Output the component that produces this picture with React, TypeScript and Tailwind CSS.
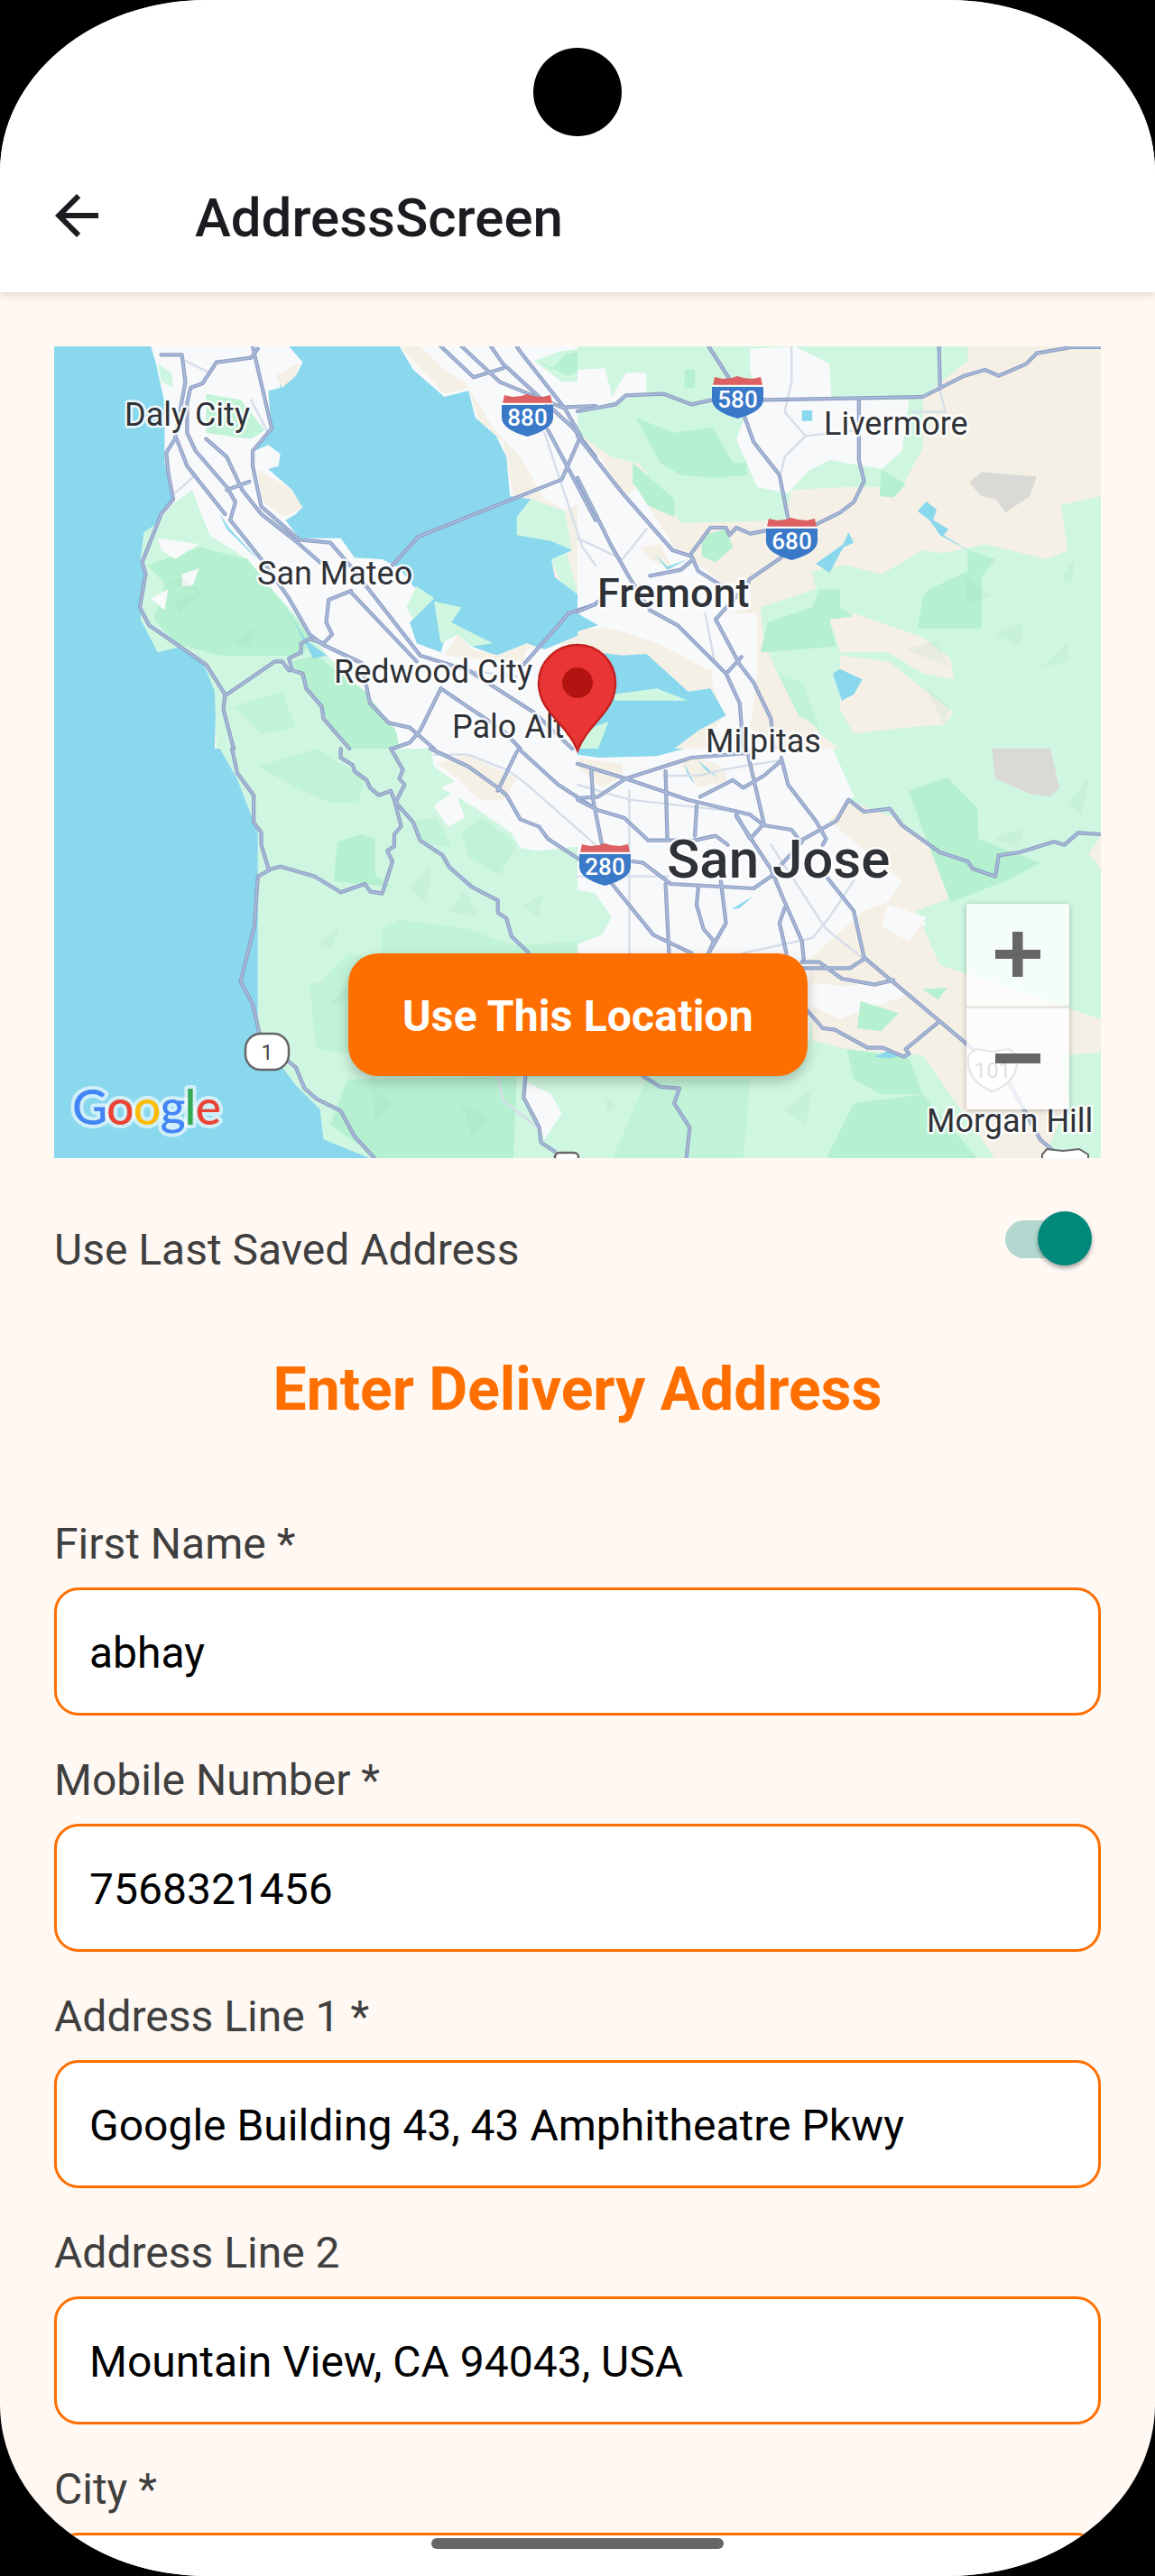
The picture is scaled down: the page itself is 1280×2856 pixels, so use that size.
import React from 'react';

type Fill = [string, string];

const WATER = '#8ad8ee';
const LIGHT = '#cff6e0';
const MID = '#c0f3d7';
const DARK = '#b5f0d0';
const TAN = '#f5f0e6';
const URBAN = '#f8f9fa';
const GREY = '#d9dad5';
const FACET = '#8fd0ac20';

// every quadrant below is written in the pixels of a zoomed crop, so it is scaled back down when drawn
const quadrants: { at: string; fills: Fill[]; roads: string[]; minor: string[] }[] = [
  {
    at: 'translate(0,-4) scale(0.38265,0.33333)',
    fills: [
      [TAN, '1000,12 1568,12 1568,1010 1440,1000 1300,1040 1200,1000 1340,640 1330,500 1300,330 1230,260 1200,150 1130,170 1040,60'],
      [URBAN, '1060,12 1568,12 1568,500 1480,560 1420,520 1350,380 1270,280 1190,130 1130,90'],
      [LIGHT, '1390,60 1460,30 1568,12 1568,130 1470,130'],
      [DARK, '1400,60 1440,90 1480,40 1568,12 1568,70 1490,110'],
      [LIGHT, '1340,580 1380,520 1480,560 1500,700 1568,790 1568,880 1490,860 1440,720 1400,660 1340,640'],
      [TAN, '1480,680 1568,760 1568,860 1520,850'],
      [WATER, '680,12 720,65 700,110 650,110 655,150 620,160 630,290 580,360 620,340 655,370 650,410 620,420 690,490 690,520 720,545 700,570 670,590 710,650 800,650 830,650 870,715 950,720 1000,750 1040,810 1100,850 1030,930 1050,1000 1120,1030 1130,990 1170,970 1210,1010 1280,1040 1370,1000 1420,1020 1568,950 1568,840 1530,850 1450,780 1440,720 1500,690 1440,660 1340,640 1340,580 1380,520 1320,510 1310,380 1280,310 1220,250 1200,160 1130,180 1040,90 1000,12'],
      [TAN, '640,110 710,65 700,110 660,150'],
      [TAN, '590,420 690,490 720,550 660,580 600,520'],
      [LIGHT, '1050,810 1100,850 1040,920 1020,880'],
      [LIGHT, '1100,860 1180,880 1150,930 1270,1000 1210,1010 1170,970 1120,1000'],
      [TAN, '1130,1040 1170,970 1210,1020 1290,1040 1370,1000 1360,1060 1200,1050'],
      [WATER, '0,12 280,12 295,70 320,200 320,400 345,520 300,590 250,720 265,770 245,880 275,950 370,1020 440,1070 470,1160 465,1350 0,1350'],
      [LIGHT, '300,70 340,100 345,150 310,130'],
      [MID, '440,170 540,190 610,290 570,320 440,300'],
      [LIGHT, '260,630 300,600 340,540 400,490 450,640 560,720 640,830 740,960 790,1040 900,1160 990,1290 1000,1350 470,1350 465,1160 430,1060 370,1010 300,1030 250,920 265,770 250,720'],
      [DARK, '270,740 420,680 560,720 650,850 740,980 720,1040 480,1040 350,1000 290,920 320,800'],
      [URBAN, '300,650 420,670 350,720 310,690'],
      [URBAN, '370,770 420,750 400,810 370,810'],
      [URBAN, '280,850 330,820 320,890'],
      [DARK, '690,1060 760,1040 900,1160 990,1290 1000,1350 850,1350 730,1150'],
      [MID, '520,1210 660,1160 700,1280 600,1300'],
      [FACET, '350,860 440,820 360,900'],
      [FACET, '520,1000 590,940 560,1010'],
      [FACET, '330,800 430,830 370,780'],
      [WATER, '480,570 510,620 590,720 570,700 500,620'],
      [WATER, '640,830 730,990 790,1040 750,1050 700,940'],
      [URBAN, '720,900 800,830 860,920 800,970 760,950'],
    ],
    roads: [
      'M310 40 H370 L380 130 L350 320 L325 365 L330 430 L345 520 L310 570 L255 730 L265 770 L248 880 L275 940 L440 1070 L495 1170 L490 1220 L520 1350',
      'M590 20 L570 50 L470 65 L430 135 L395 150 L385 200 L385 300 L410 360 L500 480 L525 530 L510 590 L600 720 L680 850 L740 970 L780 1005 L890 1065 L915 1200 L970 1265 L1030 1280 L1100 1350',
      'M575 12 L630 285 L575 360 L575 410 L600 545 L710 655 L800 665 L860 745 L1060 1040 L1200 1090 L1390 1230 L1500 1350',
      'M440 320 L500 380 L545 490 L600 570 L700 660 L770 730',
      'M980 740 L1055 645 L1470 455 L1525 310 L1480 220 L1350 30 L1340 12',
      'M355 320 L385 410 L495 570',
      'M1120 12 L1215 115 L1300 85',
      'M1180 12 L1290 130 L1470 215 L1568 210',
      'M1265 12 L1300 70 L1500 280 L1568 380',
      'M1430 290 L1490 420 L1568 590',
      'M500 490 L565 462',
      'M860 825 L795 855 L788 930 L805 970 L780 1000 L740 985 L715 1000 L715 1030 L680 1050 L690 1090 L720 1100 L730 1150 L775 1210 L780 1250 L855 1350',
      'M500 1170 L640 1060 L660 1060 L680 1090',
      'M860 830 L1050 1060',
      'M1120 1150 L1060 1290 L1030 1330 L980 1350',
      'M1120 1150 L1300 1290 L1350 1350',
      'M1360 1070 L1490 900 L1568 870',
    ],
    minor: ['M380 60 L450 100', 'M570 190 L620 300', 'M350 500 L410 440', 'M1420 300 L1530 680 L1568 740', 'M1200 1090 L1340 1110'],
  },
  {
    at: 'translate(580,-4) scale(0.38265,0.33333)',
    fills: [
      [TAN, '0,12 1516,12 1516,1350 0,1350'],
      [LIGHT, '0,12 1130,12 1130,60 1000,180 1000,350 940,480 780,480 620,490 530,440 320,440 100,380 0,300'],
      [LIGHT, '160,370 530,440 620,490 600,590 300,600'],
      [URBAN, '0,90 80,85 100,180 120,140 140,100 200,100 200,170 90,200 0,230'],
      [URBAN, '500,20 630,12 730,70 735,180 600,190 540,190 500,100'],
      [URBAN, '540,190 700,190 820,190 960,190 940,360 880,420 730,390 670,425 610,500 520,480 460,320 480,260'],
      [DARK, '310,90 340,90 340,150 310,150'],
      [DARK, '280,300 390,280 450,400 490,400 490,440 400,450 300,440 240,400 170,250'],
      [DARK, '160,400 280,520 280,580 160,520'],
      [DARK, '360,640 430,620 450,680 400,730 360,710'],
      [DARK, '880,420 950,470 915,515 875,510'],
      [LIGHT, '1516,510 1400,540 1420,690 1360,720 1180,670 1060,700 1000,690 880,770 780,740 680,760 690,820 530,880 540,1000 580,1100 700,1300 760,1350 1516,1350'],
      [TAN, '730,920 800,900 1000,980 1080,1050 1090,1120 1000,1100 900,1030 760,1030'],
      [TAN, '760,1040 900,1060 1090,1230 1060,1270 950,1280 800,1300 760,1220'],
      [DARK, '700,820 760,820 760,880 800,910 730,920 750,1010 530,1030 550,930 680,880'],
      [DARK, '1020,820 1130,760 1130,690 1210,720 1170,780 1170,950 985,950 1000,850'],
      [MID, '580,1100 650,1130 700,1280 640,1240'],
      [FACET, '1120,780 1200,840 1130,870'],
      [FACET, '1400,780 1440,720 1430,800'],
      [FACET, '1210,970 1290,930 1280,1010'],
      [FACET, '1010,1150 1080,1210 1060,1270'],
      [FACET, '1340,1080 1420,1000 1420,1060'],
      [FACET, '950,1020 1040,990 1080,1080'],
      [GREY, '1135,465 1170,430 1330,445 1310,510 1240,565 1210,520 1170,510'],
      [WATER, '985,560 1010,528 1040,555 1030,590 1075,620 1060,640 1145,700 1050,640 1020,590'],
      [WATER, '690,735 770,670 785,630 800,665 770,680 730,765'],
      [WATER, '740,1100 760,1085 825,1120 800,1170 765,1190'],
      [WATER, '650,225 680,225 680,260 650,260'],
      [URBAN, '0,300 60,370 170,480 280,680 330,720 420,800 500,800 500,880 440,900 520,900 520,1100 500,1280 570,1350 370,1350 420,1240 380,1090 300,1040 230,1000 100,950 0,950'],
      [TAN, '60,370 170,480 140,510 90,420'],
      [TAN, '180,680 240,670 280,760 210,720'],
      [TAN, '300,1070 390,1090 390,1150 320,1110'],
      [WATER, '0,1000 60,1030 130,1040 200,1035 320,1160 385,1150 430,1240 350,1290 280,1350 0,1350'],
      [WATER, '0,900 60,940 0,960'],
      [WATER, '225,705 260,745 320,720 260,755'],
      [LIGHT, '100,1170 230,1150 320,1190 190,1190 110,1190'],
      [LIGHT, '0,1300 90,1260 60,1350 0,1350'],
    ],
    roads: [
      'M380 12 L440 120',
      'M0 228 L110 205 L140 175 L250 170 L330 205 L390 190 H540 L1000 180 L1120 110 L1180 90 L1220 110 L1300 70 L1330 35 L1430 15 L1516 15',
      'M485 250 L510 330 L585 440 L610 585',
      'M815 190 V390 L830 460 L800 530 L760 565 L690 605',
      'M1047 12 L1050 145',
      'M0 310 L130 500 L275 690 L330 710 L350 760 L420 810',
      'M0 450 L100 680 L150 780 L210 890 L290 940 L430 1100 L470 1200 L480 1350',
      'M330 700 L385 615 L430 615 L440 640 L460 615 L500 635 L545 625',
      'M590 715 L500 785 L490 800',
      'M0 895 L50 870 L60 860',
      'M210 775 L300 755 L335 720',
      'M495 800 L400 920 L470 1070 L510 1130 L560 1250 L570 1350',
      'M435 1095 L475 1045',
    ],
    minor: [
      'M620 12 L620 130 L600 230 L660 310 L600 380 L590 430',
      'M660 310 L815 290',
      'M1047 145 L1065 230 L970 230',
      'M0 650 L130 720 L200 620',
      'M370 900 L395 1050',
    ],
  },
  {
    at: 'translate(0,446) scale(0.38265,0.33333)',
    fills: [
      [LIGHT, '480,0 1100,0 1200,90 1120,130 1210,190 1400,340 1568,320 1568,1365 900,1365 780,1300 770,1200 700,1120 590,950 590,700 590,280 530,100'],
      [WATER, '0,0 480,0 530,100 590,280 590,700 590,950 700,1120 770,1200 780,1300 920,1365 0,1365'],
      [MID, '590,60 760,0 900,100 880,180 800,180 700,130'],
      [DARK, '820,310 890,285 930,300 930,420 980,460 880,450 810,440'],
      [MID, '950,600 1000,570 1200,600 1340,660 900,680'],
      [MID, '740,780 850,680 1568,640 1568,680 1400,1090 760,1000'],
      [DARK, '850,1100 1340,1090 1330,1365 940,1365 800,1250'],
      [MID, '1040,240 1110,230 1150,330 1060,310'],
      [MID, '1180,280 1240,230 1340,320 1290,420 1200,360'],
      [LIGHT, '770,590 950,600 950,700 850,680 770,780 740,780'],
      [FACET, '760,650 830,590 800,670'],
      [FACET, '800,850 880,740 860,830'],
      [FACET, '1030,460 1090,390 1080,520'],
      [FACET, '1140,540 1190,470 1230,560'],
      [FACET, '1360,520 1420,480 1400,560'],
      [FACET, '920,1130 990,1180 930,1240'],
      [FACET, '1180,1180 1260,1230 1210,1290'],
      [URBAN, '1090,0 1340,0 1568,180 1568,310 1420,280 1300,220 1200,140 1100,60'],
      [URBAN, '1100,190 1160,140 1190,230 1140,260'],
      [URBAN, '1290,210 1400,260 1400,340 1350,330'],
      [URBAN, '1370,1110 1440,1150 1470,1215 1420,1300 1400,1230 1360,1160'],
      [TAN, '1110,50 1200,20 1340,100 1300,170 1230,170 1160,90'],
    ],
    roads: [
      'M515 0 L530 80 L578 155 L578 245 L600 280 L600 320 L622 405',
      'M622 405 L590 425 L580 590 L540 775 L575 850 L595 950',
      'M678 1040 L700 1060 L725 1130 L760 1165 L830 1205 L870 1290 L930 1365',
      'M622 402 L655 392 L755 425 L830 478 L900 450 L915 475 L950 482 L980 375 L965 340 L985 325 L985 285 L1005 258 L985 170 L975 140 L940 155 L915 130 L905 105 L870 75 L865 55 L830 30 L830 0',
      'M975 0 L1010 70 L1000 100 L1015 120 L995 165 L990 180 L1040 245 L1060 305 L1125 355 L1145 395 L1210 460 L1285 505 L1285 545 L1310 565 L1325 625 L1375 680',
      'M1090 0 L1200 60 L1285 130 L1310 155 L1350 235 L1405 260 L1430 300 L1530 375',
      'M1345 0 L1460 120 L1568 200',
      'M1340 10 L1285 140',
      'M1365 1090 L1360 1160 L1405 1260 L1410 1310 L1450 1340',
    ],
    minor: ['M1100 20 H1200 L1310 70 L1360 110 L1568 320', 'M1285 1090 L1300 1170 L1400 1260'],
  },
  {
    at: 'translate(580,446) scale(0.38265,0.33333)',
    fills: [
      [LIGHT, '730,0 1516,0 1516,1365 0,1365 0,470 50,480 100,560 70,620 0,650 0,1090 670,970'],
      [URBAN, '0,0 740,0 800,160 730,240 940,440 900,510 1010,580 960,640 830,540 820,690 690,700 670,970 0,1090 0,650 70,620 100,560 50,480 0,470'],
      [TAN, '780,170 920,230 1130,400 1120,480 980,540 1050,720 1516,900 1516,1000 1420,1180 1350,1365 1210,1365 1000,1020 780,1000 680,970 670,700 830,540 900,510 940,440 730,240'],
      [URBAN, '900,520 1010,560 960,640 880,590'],
      [URBAN, '680,780 780,790 890,770 950,820 760,900 670,850'],
      [TAN, '0,30 130,50 130,90 70,130 0,60'],
      [TAN, '290,40 360,30 430,70 430,110 350,130'],
      [LIGHT, '1400,1020 1516,1010 1516,1365 1370,1365 1420,1180'],
      [DARK, '960,140 1070,95 1160,200 1160,300 1340,380 1240,440 1130,490 1080,510 1000,270'],
      [DARK, '820,840 930,880 880,940 810,930'],
      [DARK, '780,1000 960,1030 1000,1150 880,1150 800,1100'],
      [MID, '200,1100 500,1100 480,1365 100,1365'],
      [DARK, '800,1180 1000,1150 1160,1365 720,1365'],
      [DARK, '1000,800 1070,795 1045,835'],
      [FACET, '1210,300 1290,260 1280,330'],
      [FACET, '1420,180 1480,100 1460,220'],
      [FACET, '70,1140 110,1190 90,1210'],
      [FACET, '600,1200 680,1130 660,1260'],
      [GREY, '1200,0 1370,0 1395,130 1370,160 1310,150 1210,100'],
      [TAN, '1480,350 1516,290 1516,400'],
      [WATER, '0,0 310,0 230,25 60,30 0,20'],
      [WATER, '860,1025 900,1005 950,1020 900,1030'],
      [WATER, '445,535 510,490 470,530'],
      [WATER, '310,50 340,120 320,90'],
      [WATER, '350,40 410,100 370,70'],
    ],
    roads: [
      'M0 50 L140 100 L320 170 L500 220 L540 255 L620 270 L640 300',
      'M0 165 L60 160 L140 100 L330 30 L490 15',
      'M40 70 L45 170 L70 315',
      'M490 0 L540 250 L500 300 L460 220',
      'M590 30 L610 120 L690 240 L720 300 L710 320',
      'M460 225 L560 400 L600 510 L650 640 L655 700',
      'M640 310 L750 240 L785 170 L830 210 L905 200 L940 255 L1050 345 L1130 375 L1145 400 L1210 425 L1220 355 L1280 345 L1380 310 L1410 320 L1450 280 L1516 285',
      'M710 410 L800 540 L830 695 L1130 985 L1240 1090 L1340 1300 L1380 1340',
      'M355 160 L450 105 L480 130 L540 90 L590 40',
      'M345 190 L340 290',
      'M255 75 L260 300',
      'M160 375 L190 380 L270 450 L510 465 L560 425 L650 310',
      'M350 455 L345 520 L365 600 L395 640 L380 680',
      'M415 440 L430 580 L380 680',
      'M255 450 L265 680',
      'M100 450 L220 620 L330 680',
      'M600 530 L585 580 L605 680',
      'M650 710 H700 L765 765 L860 785 L915 770',
      'M650 730 H790 L830 700',
      'M665 870 L710 930 L745 935 L840 995 L885 995 L945 1025 L960 1015 L950 1000 L1045 910',
      'M190 1090 L240 1125 L295 1130 L280 1180 L325 1260 L315 1365',
      'M0 170 L60 205 L135 230 L205 305 L340 305 L400 290 L435 320',
    ],
    minor: [
      'M0 120 L150 170 L500 215',
      'M150 140 V680',
      'M0 425 H260',
      'M560 320 L720 600 L830 700',
      'M800 440 L730 560 L680 630 L480 680',
      'M250 90 L350 90 L420 70 L580 40',
    ],
  },
];

const labels: { text: string; x: number; y: number; size: number; weight?: number }[] = [
  { text: 'Daly City', x: 78, y: 88, size: 36 },
  { text: 'San Mateo', x: 225, y: 264, size: 36 },
  { text: 'Redwood City', x: 310, y: 373, size: 36 },
  { text: 'Palo Alto', x: 441, y: 434, size: 36 },
  { text: 'Livermore', x: 853, y: 98, size: 36 },
  { text: 'Fremont', x: 602, y: 289, size: 45, weight: 500 },
  { text: 'Milpitas', x: 722, y: 450, size: 36 },
  { text: 'San Jose', x: 679, y: 589, size: 60, weight: 500 },
  { text: 'Morgan Hill', x: 967, y: 871, size: 36 },
];

const Shield = ({ x, y, num }: { x: number; y: number; num: string }) => (
  <g transform={`translate(${x},${y})`}>
    <path d="M1 10 L3 1 L12 3 L22 2 L28 0 L35 2 L45 3 L54 1 L56 10 Z" fill="#dd6063" />
    <path d="M0 12 H57 V26 Q57 39 28.5 47 Q0 39 0 26 Z" fill="#3a78c8" />
    <path d="M0 10.5 H57" stroke="#fff" strokeWidth="1.5" />
    <text x="28.5" y="35" textAnchor="middle" fontSize="26" fontWeight="500" fill="#fff">
      {num}
    </text>
  </g>
);

const MapDrawing = () => (
  <svg viewBox="0 0 1160 900" className="block w-full h-full">
    <rect width="1160" height="900" fill={URBAN} />
    {quadrants.map((q, i) => (
      <g key={i} transform={q.at}>
        {q.fills.map(([fill, points], j) => (
          <polygon key={j} points={points} fill={fill} />
        ))}
      </g>
    ))}
    {quadrants.map((q, i) => (
      <g key={i} transform={q.at} fill="none" strokeLinejoin="round" strokeLinecap="round">
        {q.minor.map((d, j) => (
          <path key={j} d={d} stroke="#d5deea" strokeWidth="2.4" vectorEffect="non-scaling-stroke" />
        ))}
        {q.roads.map((d, j) => (
          <path key={j} d={d} stroke="#8d9ec4" strokeWidth="4.2" vectorEffect="non-scaling-stroke" />
        ))}
        {q.roads.map((d, j) => (
          <path key={j} d={d} stroke="#a9b9d8" strokeWidth="2" vectorEffect="non-scaling-stroke" />
        ))}
      </g>
    ))}

    {labels.map((l) => (
      <text
        key={l.text}
        x={l.x}
        y={l.y}
        fontSize={l.size}
        fontWeight={l.weight || 400}
        fill="#2f3237"
        stroke="#fff"
        strokeOpacity="0.85"
        strokeWidth="5"
        strokeLinejoin="round"
        paintOrder="stroke"
      >
        {l.text}
      </text>
    ))}

    <Shield x={496} y={53} num="880" />
    <Shield x={729} y={33} num="580" />
    <Shield x={789} y={190} num="680" />
    <Shield x={582} y={551} num="280" />

    {/* state route 1 */}
    <rect x="212" y="762" width="48" height="40" rx="17" fill="#fff" stroke="#666" strokeWidth="2.5" />
    <text x="236" y="791" textAnchor="middle" fontSize="23" fill="#444">
      1
    </text>

    {/* us 101, mostly washed out by the zoom control */}
    <path d="M1013 786 L1022 779 L1040 782 L1058 779 L1067 786 Q1070 815 1040 826 Q1010 815 1013 786 Z" fill="#fff" stroke="#777" strokeWidth="2" />
    <text x="1040" y="811" textAnchor="middle" fontSize="24" fill="#666">
      101
    </text>

    {/* shields cut by the map's lower edge */}
    <rect x="555" y="894" width="26" height="12" rx="5" fill="#fff" stroke="#666" strokeWidth="2.5" />
    <path d="M1095 896 L1100 890 L1118 892 L1136 890 L1146 896 V906 H1095 Z" fill="#fff" stroke="#666" strokeWidth="2" />

    {/* google mark */}
    <text
      x="20"
      y="863"
      fontSize="54"
      fontWeight="500"
      fontFamily="Lato, sans-serif"
      stroke="#fff"
      strokeOpacity="0.6"
      strokeWidth="8"
      strokeLinejoin="round"
      paintOrder="stroke"
      letterSpacing="-1"
    >
      <tspan fill="#4285f4">G</tspan>
      <tspan fill="#ea4335">o</tspan>
      <tspan fill="#fbbc05">o</tspan>
      <tspan fill="#4285f4">g</tspan>
      <tspan fill="#34a853">l</tspan>
      <tspan fill="#ea4335">e</tspan>
    </text>

    {/* marker */}
    <path
      d="M580 331 C556 331 537 350 537 373 C537 406 568 417 580 448 C592 417 622 406 622 373 C622 350 604 331 580 331 Z"
      fill="#ea3535"
      stroke="#c5221f"
      strokeWidth="2.5"
    />
    <circle cx="580" cy="373" r="17" fill="#b31412" />
  </svg>
);

const fields = [
  { label: 'First Name *', value: 'abhay' },
  { label: 'Mobile Number *', value: '7568321456' },
  { label: 'Address Line 1 *', value: 'Google Building 43, 43 Amphitheatre Pkwy' },
  { label: 'Address Line 2', value: 'Mountain View, CA 94043, USA' },
  { label: 'City *', value: '' },
];

export default function App() {
  return (
    <div className="bg-black w-[1280px] h-[2856px] font-[Roboto,sans-serif]">
      <div className="relative w-full h-full overflow-hidden bg-[#fff8f3] rounded-[228px/190px]">
        {/* camera cutout */}
        <div className="absolute z-20 left-[591px] top-[53px] w-[98px] h-[98px] rounded-full bg-black" />

        <header className="relative z-10 h-[324px] bg-white shadow-[0_3px_8px_rgba(120,90,70,0.22)] flex items-center pt-[156px] pl-[49px]">
          <svg viewBox="0 0 24 24" className="w-[72px] h-[72px] fill-[#1d1b20] -mt-[3px]">
            <path d="M20 11H7.830l5.590-5.590L12 4l-8 8 8 8 1.410-1.410L7.830 13H20v-2z" />
          </svg>
          <h1 className="ml-[95px] mt-[3px] text-[60px] leading-[72px] font-medium text-[#1d1b20]">AddressScreen</h1>
        </header>

        <main className="px-[60px] pt-[60px]">
          <div className="relative h-[900px] overflow-hidden">
            <MapDrawing />
            <div className="absolute left-[1010.5px] top-[618px] w-[114px] h-[228px] rounded-[3px] bg-white/80 shadow-[0_1px_6px_rgba(0,0,0,0.25)] flex flex-col">
              <div className="flex-1 flex items-center justify-center border-b-[3px] border-[#e6e6e2]">
                <svg viewBox="0 0 50 50" className="w-[50px] h-[50px] fill-[#666]">
                  <path d="M19 0h11.500v20H50v10H30.500v20H19V30H0V20h19z" />
                </svg>
              </div>
              <div className="flex-1 flex items-center justify-center">
                <div className="w-[50px] h-[11px] bg-[#666]" />
              </div>
            </div>
            <button className="absolute left-[326px] top-[673px] w-[509px] h-[136px] pt-[3px] rounded-[33px] bg-[#ff6f00] text-white text-[48px] tracking-[0.2px] font-bold shadow-[0_6px_14px_rgba(0,0,0,0.22)]">
              Use This Location
            </button>
          </div>

          <div className="flex justify-between h-[62px] mt-[58px]">
            <span className="text-[48px] leading-[58px] mt-[15px] text-[#3f3f3f]">Use Last Saved Address</span>
            <div className="relative w-[96px] h-[42px] mt-[11px] mr-[10px]">
              <div className="h-full w-[86px] rounded-full bg-[#b2d8d0]" />
              <div className="absolute right-0 -top-[10px] w-[60px] h-[60px] rounded-full bg-[#00897b] shadow-[0_3px_5px_rgba(0,0,0,0.35)]" />
            </div>
          </div>

          <h2 className="mt-[98px] text-center text-[66px] leading-[78px] font-bold text-[#ff6f00]">Enter Delivery Address</h2>

          <div className="mt-[103px] flex flex-col gap-[43px]">
            {fields.map((f) => (
              <div key={f.label}>
                <label className="block text-[48px] leading-[58px] text-[#3f3f3f] mb-[19px]">{f.label}</label>
                <div className="h-[142px] pt-[3px] rounded-[27px] border-[3px] border-[#ff6f00] bg-white flex items-center pl-[36px] text-[48px] text-black">
                  {f.value}
                </div>
              </div>
            ))}
          </div>
        </main>

        {/* gesture bar */}
        <div className="absolute z-20 left-[478px] top-[2814px] w-[324px] h-[12px] rounded-[6px] bg-[#666]" />
      </div>
    </div>
  );
}
